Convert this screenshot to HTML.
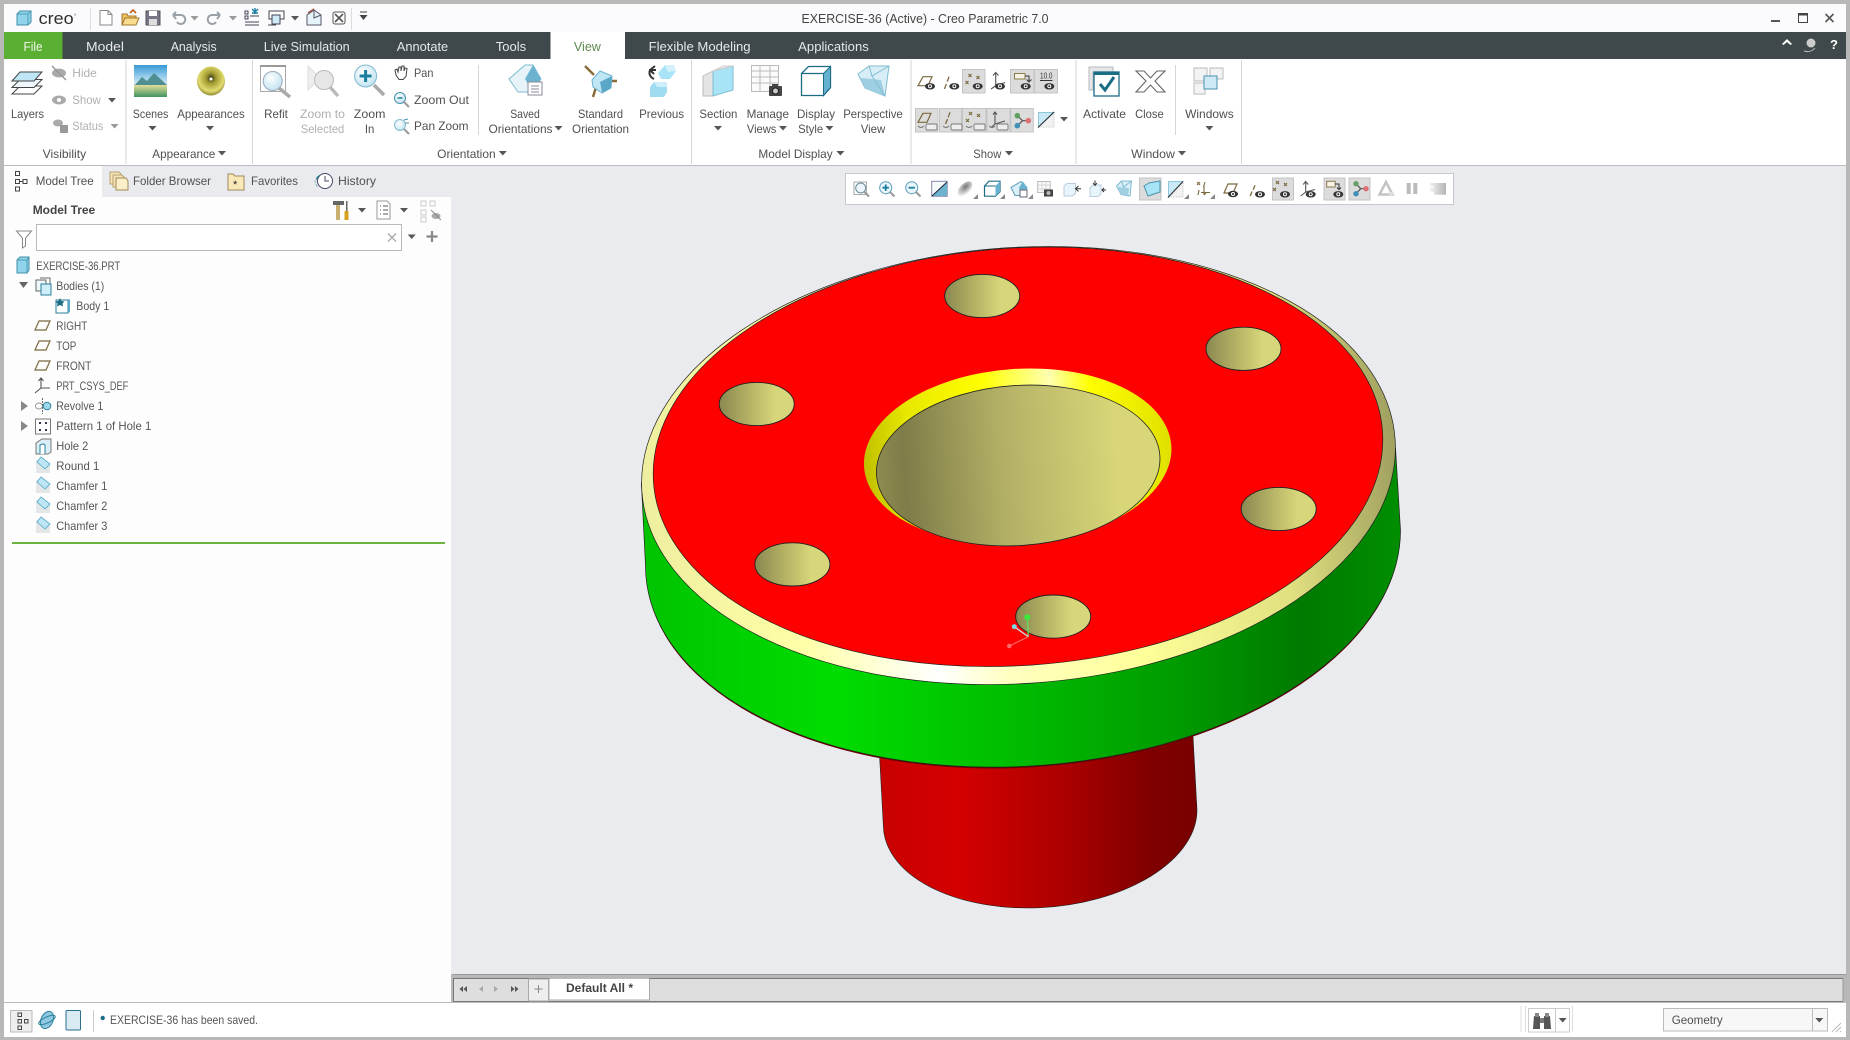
<!DOCTYPE html>
<html><head><meta charset="utf-8"><title>EXERCISE-36 (Active) - Creo Parametric 7.0</title>
<style>
html,body{margin:0;padding:0;width:1850px;height:1040px;overflow:hidden;background:#b8b8b8}
svg{display:block}
text{font-family:"Liberation Sans",sans-serif;font-size:12px;fill:#505050}
.m{text-anchor:middle}
.g{fill:#b0b0b0}
.tab{font-size:13px;fill:#e6e9e9;text-anchor:middle}
.tr{font-size:12px;fill:#565656}
</style></head><body>
<svg width="1850" height="1040" viewBox="0 0 1850 1040" xmlns="http://www.w3.org/2000/svg">
<defs>
<path id="ar" d="M-4-2H4L0 2.500z" fill="#555"/>
<path id="arg" d="M-4-2H4L0 2.500z" fill="#999"/>
<g id="eye"><ellipse rx="5" ry="3.200" fill="#333"/><circle r="2" fill="#fff"/><circle r="1" fill="#222"/></g>
<g id="plane"><path d="M-5-5H6L2 4H-9z" fill="none" stroke="#7a6a3f" stroke-width="1.200"/></g>
<g id="xs"><path d="M-3-3L0 0M0-3L-3 0M5-1L8 2M8-1L5 2M-6 4L-3 7M-3 4L-6 7" stroke="#7a6a3f" stroke-width="1.200"/></g>
<g id="cham"><path d="M-7-5L-2-9 7-2 7 7-7 7z" fill="#e4e6e8"/><path d="M-2-9L7-2 2 3-6-4z" fill="#bfe6f4" stroke="#4fa7c6" stroke-width=".8"/></g>
<g id="mini"><rect x="-1" y="4" width="11" height="6" rx="1" fill="#eee" stroke="#777" stroke-width=".9"/><path d="M-9 6q3 3 6 0" fill="none" stroke="#777"/></g>
<path id="corner" d="M3-3V2H-2z" fill="#888"/>
<linearGradient id="gGreen" gradientUnits="userSpaceOnUse" x1="645" x2="1400" y1="0" y2="0"><stop offset="0" stop-color="#00c400"/><stop offset=".25" stop-color="#00dd00"/><stop offset=".5" stop-color="#00ba00"/><stop offset=".7" stop-color="#009c00"/><stop offset=".87" stop-color="#007a00"/><stop offset="1" stop-color="#008e00"/></linearGradient>
<linearGradient id="gHub" gradientUnits="userSpaceOnUse" x1="878" x2="1197" y1="0" y2="0"><stop offset="0" stop-color="#c80000"/><stop offset=".25" stop-color="#d40000"/><stop offset=".6" stop-color="#aa0000"/><stop offset=".85" stop-color="#800000"/><stop offset="1" stop-color="#780000"/></linearGradient>
<linearGradient id="gCham" gradientUnits="userSpaceOnUse" x1="641" x2="1396" y1="0" y2="0"><stop offset="0" stop-color="#eeeea0"/><stop offset=".2" stop-color="#ffffa8"/><stop offset=".377" stop-color="#ffffff"/><stop offset=".47" stop-color="#ffffc0"/><stop offset=".65" stop-color="#ffff99"/><stop offset=".85" stop-color="#e0e080"/><stop offset="1" stop-color="#a0a060"/></linearGradient>
<linearGradient id="gYel" gradientUnits="userSpaceOnUse" x1="864" x2="1172" y1="0" y2="0"><stop offset="0" stop-color="#c0c000"/><stop offset=".15" stop-color="#e8e800"/><stop offset=".4" stop-color="#ffff00"/><stop offset=".62" stop-color="#ffffb0"/><stop offset=".75" stop-color="#ffff00"/><stop offset="1" stop-color="#e0e000"/></linearGradient>
<linearGradient id="gKh" gradientUnits="userSpaceOnUse" x1="876" x2="1160" y1="0" y2="0"><stop offset="0" stop-color="#8e8c50"/><stop offset=".1" stop-color="#7e7c48"/><stop offset=".45" stop-color="#b3b066"/><stop offset=".85" stop-color="#d8d678"/><stop offset="1" stop-color="#d8d678"/></linearGradient>
<linearGradient id="gHole"><stop offset="0" stop-color="#8a8850"/><stop offset=".45" stop-color="#bab768"/><stop offset=".75" stop-color="#d8d67a"/><stop offset="1" stop-color="#d8d67a"/></linearGradient>
<linearGradient id="gSky" x1="0" x2="0" y1="0" y2="1"><stop offset="0" stop-color="#3a9ad6"/><stop offset=".55" stop-color="#c8e6f5"/></linearGradient>
<linearGradient id="gGround" x1="0" x2="0" y1="0" y2="1"><stop offset="0" stop-color="#e3dd9a"/><stop offset="1" stop-color="#3f9460"/></linearGradient>
<radialGradient id="gGold" cx=".5" cy=".4" r=".6"><stop offset="0" stop-color="#33321a"/><stop offset=".3" stop-color="#a09a30"/><stop offset=".75" stop-color="#e3dc70"/><stop offset="1" stop-color="#8f8a30"/></radialGradient>
<radialGradient id="gLens" cx=".4" cy=".35" r=".7"><stop offset="0" stop-color="#fff"/><stop offset="1" stop-color="#bfe2f0"/></radialGradient>
<radialGradient id="gSmudge" cx=".6" cy=".4" r=".6"><stop offset="0" stop-color="#777"/><stop offset="1" stop-color="#eee"/></radialGradient>
<linearGradient id="gGrayBar"><stop offset="0" stop-color="#f2f2f2"/><stop offset="1" stop-color="#b4b4b4"/></linearGradient>
<g id="hole0"><ellipse rx="37.500" ry="21.600" fill="url(#gHole)" stroke="#222" stroke-width=".9"/></g>
</defs>

<!-- frame -->
<rect width="1850" height="1040" fill="#b8b8b8"/>
<rect x="4" y="4" width="1842" height="28" fill="#fbfbfd"/>
<rect x="4" y="32" width="1842" height="27" fill="#3f484a"/>
<rect x="4" y="59" width="1842" height="106" fill="#fff"/>
<rect x="4" y="165" width="1842" height="1" fill="#bcbcc2"/>
<rect x="4" y="166" width="447" height="836" fill="#fefdfd"/>
<rect x="451" y="166" width="1395" height="808" fill="#e9ebef"/>
<rect x="4" y="1002" width="1842" height="35" fill="#fff"/>

<!-- title bar -->
<path d="M17 14l3-3H31V22l-3 3H17z" fill="#8fd4ea" stroke="#3f8fa8" stroke-width="1"/><path d="M17 14H28V25M28 14l3-3" fill="none" stroke="#3f8fa8" stroke-width=".8"/>
<text x="38.700" y="24" style="font-size:17px;fill:#2e2e2e" textLength="35" lengthAdjust="spacingAndGlyphs">creo</text><text x="74" y="18" style="font-size:6px;fill:#444">°</text>
<rect x="90" y="8" width="1" height="22" fill="#ddd"/><rect x="351" y="8" width="1" height="22" fill="#ddd"/>
<path d="M100 10.500h8l4 4V25h-12z" fill="#fff" stroke="#888"/><path d="M108 10.500v4h4" fill="none" stroke="#888"/>
<path d="M122 14h5l1 2h8v9h-14z" fill="#f0c060" stroke="#a07830"/><path d="M122 25l3-7h14l-3 7z" fill="#f9dc8e" stroke="#a07830"/><path d="M130 13l3-3 3 3" fill="none" stroke="#c06020" stroke-width="1.600"/>
<rect x="146" y="11" width="14" height="14" fill="#778" stroke="#555"/><rect x="149" y="11" width="8" height="5" fill="#fff"/><rect x="149" y="19" width="8" height="6" fill="#ddd"/>
<path d="M173 15h8a4.500 4.500 0 1 1-4 7M173 15l3-3M173 15l3 4" fill="none" stroke="#9aa0a8" stroke-width="2"/>
<use href="#arg" x="194.500" y="18"/>
<path d="M220 15h-8a4.500 4.500 0 1 0 4 7M220 15l-3-3M220 15l-3 4" fill="none" stroke="#9aa0a8" stroke-width="2"/>
<use href="#arg" x="233" y="18"/>
<g stroke="#445" fill="none"><rect x="245" y="11" width="3" height="3"/><rect x="245" y="16" width="3" height="3"/><path d="M245 22h14M245 25h14M250 16h9"/></g><path d="M252 9l3 3 3-3M255 8v6M252 13h6" stroke="#1a7fa0" stroke-width="1.400" fill="none"/>
<g fill="none" stroke="#445"><rect x="269" y="11" width="15" height="8"/><rect x="272" y="15" width="8" height="9" fill="#cfeaf7"/><path d="M268 25h8"/></g>
<use href="#ar" x="295" y="18"/>
<path d="M307 15l7-5 7 5v10h-14z" fill="#e6f4fa" stroke="#556"/><path d="M314 10v8l7-3" fill="none" stroke="#556"/><path d="M308 13l6-4" stroke="#a05040" stroke-width="1.400"/>
<rect x="333" y="12" width="12" height="12" rx="2" fill="#fff" stroke="#555"/><path d="M335 14l8 8M343 14l-8 8" stroke="#555" stroke-width="1.600"/>
<path d="M360 12h7" stroke="#444" stroke-width="1"/><path d="M359.500 15h8l-4 5z" fill="#444"/>
<text class="m" x="925" y="23" style="font-size:13px;fill:#444" textLength="247" lengthAdjust="spacingAndGlyphs">EXERCISE-36 (Active) - Creo Parametric 7.0</text>
<rect x="1771" y="20" width="9" height="2" fill="#555"/>
<rect x="1798.500" y="13.500" width="9" height="9" fill="none" stroke="#444"/><rect x="1798" y="13" width="10" height="2.500" fill="#444"/>
<path d="M1825.500 14l8 8M1833.500 14l-8 8" stroke="#555" stroke-width="1.600"/>

<!-- tab bar -->
<rect x="4" y="32" width="58.500" height="27" fill="#5bb033"/>
<rect x="550.500" y="32" width="74.500" height="27" fill="#fff"/>
<text class="tab" x="33" y="51" style="fill:#f2f7ee" textLength="19" lengthAdjust="spacingAndGlyphs">File</text>
<text class="tab" x="105" y="51" textLength="38" lengthAdjust="spacingAndGlyphs">Model</text>
<text class="tab" x="193.700" y="51" textLength="46" lengthAdjust="spacingAndGlyphs">Analysis</text>
<text class="tab" x="306.700" y="51" textLength="86" lengthAdjust="spacingAndGlyphs">Live Simulation</text>
<text class="tab" x="422.500" y="51" textLength="51.400" lengthAdjust="spacingAndGlyphs">Annotate</text>
<text class="tab" x="511" y="51" textLength="30.400" lengthAdjust="spacingAndGlyphs">Tools</text>
<text class="tab" x="587.400" y="51" style="fill:#5f8a52" textLength="27" lengthAdjust="spacingAndGlyphs">View</text>
<text class="tab" x="699.600" y="51" textLength="102" lengthAdjust="spacingAndGlyphs">Flexible Modeling</text>
<text class="tab" x="833.500" y="51" textLength="70.600" lengthAdjust="spacingAndGlyphs">Applications</text>
<path d="M1782 44l5-5 5 5-1.500 1-3.500-3-3.500 3z" fill="#fff"/>
<circle cx="1811" cy="43" r="4.500" fill="#ccc"/><path d="M1804 51q7 2 11-3" fill="none" stroke="#bbb"/>
<text x="1830" y="49" style="font-size:13px;font-weight:bold;fill:#fff">?</text>

<!-- ribbon separators -->
<g fill="#d4d6d8"><rect x="125.500" y="60" width="1" height="104"/><rect x="252" y="60" width="1" height="104"/><rect x="691" y="60" width="1" height="104"/><rect x="910.500" y="60" width="1" height="104"/><rect x="1075.500" y="60" width="1" height="104"/><rect x="1241" y="60" width="1" height="104"/><rect x="478" y="65" width="1" height="70"/><rect x="1175" y="65" width="1" height="70"/></g>

<!-- Visibility -->
<path d="M12 94l8-8h22l-8 8z" fill="#fff" stroke="#444"/><path d="M12 87.500l8-8h22l-8 8z" fill="#eef8fc" stroke="#444"/><path d="M12 81l8-9h22l-8 9z" fill="#bfe6f5" stroke="#444"/>
<text class="m" x="27.500" y="118" textLength="33" lengthAdjust="spacingAndGlyphs">Layers</text>
<ellipse cx="59" cy="73" rx="7" ry="4.500" fill="#aaa"/><path d="M52 66l14 14" stroke="#999" stroke-width="1.500"/>
<ellipse cx="59" cy="100" rx="7" ry="4.500" fill="#aaa"/><circle cx="59" cy="100" r="2" fill="#fff"/>
<ellipse cx="58" cy="123" rx="5" ry="3.500" fill="#aaa"/><rect x="60" y="125" width="8" height="8" fill="#999"/>
<text class="g" x="72.300" y="77" textLength="24.500" lengthAdjust="spacingAndGlyphs">Hide</text>
<text class="g" x="72.300" y="104" textLength="28.500" lengthAdjust="spacingAndGlyphs">Show</text>
<text class="g" x="72.300" y="130" textLength="31" lengthAdjust="spacingAndGlyphs">Status</text>
<use href="#ar" x="112" y="100"/><use href="#arg" x="114.600" y="126"/>
<text class="m" x="64.400" y="158" textLength="43.500" lengthAdjust="spacingAndGlyphs">Visibility</text>

<!-- Appearance -->
<rect x="134" y="65" width="33" height="32" fill="url(#gSky)"/><path d="M134 86l8-9 5 4 7-8 13 12v4h-33z" fill="#4f8f92"/><rect x="134" y="85" width="33" height="12" fill="url(#gGround)"/>
<text class="m" x="150.600" y="118" textLength="35.600" lengthAdjust="spacingAndGlyphs">Scenes</text><use href="#ar" x="152.500" y="128"/>
<ellipse cx="211" cy="81" rx="14" ry="14.500" fill="url(#gGold)"/><circle cx="211" cy="79" r="1.500" fill="#fff"/>
<text class="m" x="211" y="118" textLength="67.600" lengthAdjust="spacingAndGlyphs">Appearances</text><use href="#ar" x="210" y="128"/>
<text class="m" x="183.800" y="158" textLength="63" lengthAdjust="spacingAndGlyphs">Appearance</text><use href="#ar" x="222" y="153"/>

<!-- Orientation -->
<rect x="260.500" y="65.500" width="25" height="26" fill="#fff" stroke="#aaa"/><rect x="260" y="65" width="26" height="2" fill="#999"/>
<circle cx="272.700" cy="81" r="9.500" fill="url(#gLens)" stroke="#9ab"/><path d="M279 88l11 9" stroke="#aaa" stroke-width="3.500"/>
<path d="M308 66l12 12-12 12z" fill="#eee" stroke="#ddd"/><circle cx="324" cy="80" r="9.500" fill="#e6e6e6" stroke="#bbb"/><path d="M330 87l8 9" stroke="#bbb" stroke-width="3.500"/>
<circle cx="365.600" cy="76" r="11" fill="url(#gLens)" stroke="#7fb7cd"/><path d="M365.600 70v12M359.600 76h12" stroke="#1a7fa0" stroke-width="3"/><path d="M374 85l10 10" stroke="#aaa" stroke-width="3.500"/>
<path d="M396 75l-1-5 2-1 1 3 1-5 2 0 0 4 1-5 2 0 0 5 1-3 2 .5-1 8-3 3h-4z" fill="#fff" stroke="#444"/>
<circle cx="400" cy="98" r="5.500" fill="url(#gLens)" stroke="#4a93ad"/><path d="M397.500 98h5" stroke="#1a7fa0" stroke-width="1.500"/><path d="M404 102l5 5" stroke="#999" stroke-width="2"/>
<circle cx="400" cy="125" r="5.500" fill="url(#gLens)" stroke="#8bc"/><path d="M404 129l5 5" stroke="#999" stroke-width="2"/><path d="M404 120l4-1M405 123l4 0" stroke="#4a93ad"/>
<text class="m" x="276" y="118" textLength="23.700" lengthAdjust="spacingAndGlyphs">Refit</text>
<text class="m g" x="322.500" y="118" textLength="45" lengthAdjust="spacingAndGlyphs">Zoom to</text>
<text class="m g" x="322.500" y="133" textLength="43.500" lengthAdjust="spacingAndGlyphs">Selected</text>
<text class="m" x="369.600" y="118" textLength="31.600" lengthAdjust="spacingAndGlyphs">Zoom</text>
<text class="m" x="369.600" y="133" textLength="9.500" lengthAdjust="spacingAndGlyphs">In</text>
<text x="414" y="77" textLength="19.400" lengthAdjust="spacingAndGlyphs">Pan</text>
<text x="414" y="104" textLength="55" lengthAdjust="spacingAndGlyphs">Zoom Out</text>
<text x="414" y="130" textLength="54.500" lengthAdjust="spacingAndGlyphs">Pan Zoom</text>
<path d="M525 65l-16 14 9 13h15l8-13-8-14z" fill="#e6f4fa" stroke="#7fbcd2"/><path d="M533 65l8 14-8 13-8-13z" fill="#6cb3d0"/><rect x="528" y="82" width="14" height="13" fill="#fff" stroke="#889"/><path d="M531 86h8M531 89h8M531 92h8" stroke="#889"/>
<text class="m" x="525" y="118" textLength="29.600" lengthAdjust="spacingAndGlyphs">Saved</text>
<text class="m" x="520.500" y="133" textLength="64" lengthAdjust="spacingAndGlyphs">Orientations</text><use href="#ar" x="558.500" y="128"/>
<path d="M585 66l9 9M617 81h-8M593 97l4-13" stroke="#8a6d3b" stroke-width="2.500"/><path d="M592 80l8-9 12 5-1 12-9 5-9-6z" fill="#bfe6f5" stroke="#6cb3d0"/><path d="M600 82l12-6-1 12-9 5z" fill="#5aa7c8"/>
<text class="m" x="600.500" y="118" textLength="45" lengthAdjust="spacingAndGlyphs">Standard</text>
<text class="m" x="600.500" y="133" textLength="57" lengthAdjust="spacingAndGlyphs">Orientation</text>
<path d="M658 73l7-8h9l2 6-6 8h-9z" fill="#a9e3f6"/><path d="M665 65l3 7 8-1-2-6z" fill="#d4f1fb"/><path d="M650 87l4-5h13v10l-3 5h-14z" fill="#9fdcf0"/><path d="M654 82l3 5h10v-5z" fill="#cdeefa"/>
<path d="M654 79q-6-3-4-9l6 0M650 70l5-4M650 70l4 4" fill="none" stroke="#333" stroke-width="2"/>
<text class="m" x="661.600" y="118" textLength="45" lengthAdjust="spacingAndGlyphs">Previous</text>
<text class="m" x="466.400" y="158" textLength="58.500" lengthAdjust="spacingAndGlyphs">Orientation</text><use href="#ar" x="502.800" y="153"/>

<!-- Model display -->
<path d="M703 76l10-5v25h-10z" fill="#e4e4e4" stroke="#bbb"/><path d="M713 71l20-5v24l-20 6z" fill="#a9e3f6" stroke="#7fbcd2"/><path d="M703 76l20-10h10l-20 5z" fill="#f0f0f0" stroke="#ccc"/>
<text class="m" x="718.400" y="118" textLength="38" lengthAdjust="spacingAndGlyphs">Section</text><use href="#ar" x="718" y="128"/>
<rect x="751.500" y="65.500" width="27" height="26" fill="#fbfbfb" stroke="#bbb"/><path d="M752 71h27M752 77h27M752 83h27M760 65v27M770 65v27" stroke="#bbb"/>
<rect x="769" y="86" width="13" height="10" rx="1" fill="#444"/><circle cx="775.500" cy="91" r="3" fill="#ccc" stroke="#222"/><rect x="772" y="84" width="6" height="3" fill="#444"/>
<text class="m" x="767.800" y="118" textLength="42.400" lengthAdjust="spacingAndGlyphs">Manage</text>
<text class="m" x="761.600" y="133" textLength="29.400" lengthAdjust="spacingAndGlyphs">Views</text><use href="#ar" x="783" y="128"/>
<path d="M801.500 73.500l7-7h22v21l-7 8h-22z" fill="#fff" stroke="#1b6d86" stroke-width="1.300"/><path d="M823.500 73.500l7-7v21l-7 8z" fill="#65b1cf" stroke="#1b6d86"/><path d="M801.500 73.500h22" stroke="#1b6d86" stroke-width="1.300"/>
<text class="m" x="816" y="118" textLength="38" lengthAdjust="spacingAndGlyphs">Display</text>
<text class="m" x="810.600" y="133" textLength="25" lengthAdjust="spacingAndGlyphs">Style</text><use href="#ar" x="829.400" y="128"/>
<path d="M858 74l11-8h20l-4 30-20-8z" fill="#d8eef6" stroke="#7fbcd2"/><path d="M865 88l-4-10 20 2 4 16z" fill="#9fcfe2"/><path d="M869 66l3 10 17-10M872 76l13 20" fill="none" stroke="#7fbcd2"/>
<text class="m" x="873" y="118" textLength="59.600" lengthAdjust="spacingAndGlyphs">Perspective</text>
<text class="m" x="873" y="133" textLength="24.500" lengthAdjust="spacingAndGlyphs">View</text>
<text class="m" x="795.500" y="158" textLength="74.300" lengthAdjust="spacingAndGlyphs">Model Display</text><use href="#ar" x="840.400" y="153"/>

<!-- Show -->
<g fill="#dcdcdc" stroke="#c4c4c4"><rect x="962.500" y="69.500" width="22.500" height="23.500"/><rect x="1010.500" y="69.500" width="23.500" height="23.500"/><rect x="1034.500" y="69.500" width="23" height="23.500"/>
<rect x="915.500" y="108.500" width="22.500" height="23.500"/><rect x="939.500" y="108.500" width="22" height="23.500"/><rect x="962.500" y="108.500" width="23.500" height="23.500"/><rect x="987" y="108.500" width="23" height="23.500"/><rect x="1010.800" y="108.500" width="22.500" height="23.500"/></g>
<path d="M923 76.700h9L928 85.700h-10z" fill="none" stroke="#7a6a3f" stroke-width="1.200"/><use href="#eye" x="930" y="86.300"/>
<path d="M949 76.700l-1.800 5M946.300 84l-1.800 5" stroke="#7a6a3f" stroke-width="1.300"/><use href="#eye" x="954.300" y="86.300"/>
<use href="#xs" x="971.500" y="77"/><use href="#eye" x="977.700" y="86.300"/>
<path d="M995.700 73V85.700L991 89M995.700 85.700L1005 82.500M993 75.500l2.700-3 2.700 3" fill="none" stroke="#555" stroke-width="1.100"/><use href="#eye" x="1000" y="86.300"/>
<rect x="1014.500" y="73.500" width="10.500" height="5.500" fill="#f6f2e4" stroke="#8a7a50"/><path d="M1025 76h4v5M1026.500 79.500l2.500 2.500 2.500-2.500" stroke="#333" fill="none"/><use href="#eye" x="1025.700" y="86.300"/>
<text x="1040" y="78.500" style="font-size:8.500px;fill:#333" textLength="12.500" lengthAdjust="spacingAndGlyphs">10.0</text><path d="M1040 80.500h12.500" stroke="#333"/><use href="#eye" x="1049.300" y="86.300"/>
<path d="M923 113.300h8L927 122.300h-9z" fill="none" stroke="#7a6a3f" stroke-width="1.200"/><use href="#mini" x="927" y="120"/>
<path d="M950 112.300l-1.800 5M947.500 119l-2 5" stroke="#7a6a3f" stroke-width="1.300"/><use href="#mini" x="952" y="120"/>
<use href="#xs" x="972" y="115"/><use href="#mini" x="975" y="120"/>
<path d="M995 112V124L991 127.500M995 124L1005 121M993 114.500l2-2.500 2 2.500" fill="none" stroke="#555" stroke-width="1.100"/><use href="#mini" x="998" y="120"/>
<path d="M1017.300 115.700L1022.600 120.700 1017.300 125.700M1022.600 120.700h5.700" stroke="#555" fill="none" stroke-width="1.200"/><circle cx="1017.300" cy="115.700" r="2.800" fill="#5f9f5f"/><circle cx="1017.300" cy="125.700" r="2.800" fill="#3f8fb8"/><circle cx="1028.300" cy="120.700" r="2.800" fill="#dd7070"/>
<path d="M1038.500 127L1054 112.500V127z" fill="#f2f2f2" stroke="#ccc" stroke-dasharray="1.500 1"/><path d="M1038.500 127V112.500H1054z" fill="#c9e9f6" stroke="#8fc6da"/><path d="M1038 127.500l16-15.500" stroke="#333" stroke-width="1.100"/>
<use href="#ar" x="1064" y="119"/>
<text class="m" x="987.300" y="158" textLength="28" lengthAdjust="spacingAndGlyphs">Show</text><use href="#ar" x="1009" y="153"/>

<!-- Window -->
<path d="M1089 67h24v5h-20v18h-4z" fill="#e4e6e8" stroke="#b8babc"/>
<rect x="1094" y="72" width="25" height="24" fill="#fff" stroke="#1b6d86" stroke-width="1.300"/><rect x="1094" y="72" width="25" height="3" fill="#1b6d86"/><path d="M1100 84l5 6 9-13" fill="none" stroke="#1b6d86" stroke-width="3"/>
<text class="m" x="1104.500" y="118" textLength="43" lengthAdjust="spacingAndGlyphs">Activate</text>
<path d="M1136 71h8l6.500 7 6.500-7h8l-10 10 10 11h-8l-6.500-7-6.500 7h-8l10-11z" fill="#fff" stroke="#666" stroke-width="1.100"/>
<text class="m" x="1149.400" y="118" textLength="28.600" lengthAdjust="spacingAndGlyphs">Close</text>
<rect x="1194" y="83" width="11" height="11" fill="#f3f3f3" stroke="#bbb"/><rect x="1194" y="68" width="13" height="13" fill="#f3f3f3" stroke="#bbb"/><rect x="1210" y="68" width="13" height="11" fill="#f3f3f3" stroke="#bbb"/><rect x="1204" y="76" width="13" height="13" fill="#cfeaf7" stroke="#4a93ad"/>
<text class="m" x="1209.400" y="118" textLength="48.600" lengthAdjust="spacingAndGlyphs">Windows</text><use href="#ar" x="1209.400" y="128"/>
<text class="m" x="1153" y="158" textLength="43.700" lengthAdjust="spacingAndGlyphs">Window</text><use href="#ar" x="1182" y="153"/>

<!-- Panel tabs -->
<rect x="102" y="166" width="349" height="31" fill="#e9ebee"/>
<g fill="none" stroke="#444"><rect x="15.500" y="171.500" width="4" height="4"/><rect x="15.500" y="179.500" width="4" height="4"/><rect x="15.500" y="187" width="4" height="4"/><rect x="23" y="179.500" width="4" height="4"/></g><path d="M19.500 181.500h3.500" stroke="#444"/>
<text x="35.700" y="185" textLength="58" lengthAdjust="spacingAndGlyphs">Model Tree</text>
<path d="M110 172h9l2 2v10h-11z" fill="#f6e4b8" stroke="#b8a070"/><path d="M113 175h9l2 2v10h-11z" fill="#f6e4b8" stroke="#b8a070"/><path d="M116 178h10l2 3v9h-12z" fill="#fbeec8" stroke="#a08858"/>
<text x="133" y="185" textLength="78" lengthAdjust="spacingAndGlyphs">Folder Browser</text>
<path d="M228 174h5l2 2h9v14h-16z" fill="#f9e8b8" stroke="#a08858"/><text x="233" y="188" style="font-size:11px;fill:#222">*</text>
<text x="251" y="185" textLength="47" lengthAdjust="spacingAndGlyphs">Favorites</text>
<circle cx="325" cy="181" r="7.500" fill="#fff" stroke="#446"/><path d="M325 176v5h4" stroke="#446" fill="none"/><path d="M321 174.500a7.500 7.500 0 0 0-3 13l-3.500-6z" fill="#1b6d86"/>
<text x="338" y="185" textLength="38" lengthAdjust="spacingAndGlyphs">History</text>

<!-- Panel tools -->
<text x="32.700" y="214" style="font-weight:bold;fill:#444" textLength="62.500" lengthAdjust="spacingAndGlyphs">Model Tree</text>
<rect x="336" y="204" width="4" height="16" fill="#c9b070"/><path d="M333 201h11v4h-11z" fill="#666"/><rect x="346" y="201" width="1.500" height="10" fill="#666"/><rect x="344.500" y="211" width="4" height="9" fill="#d4a020"/>
<use href="#ar" x="362" y="210"/>
<path d="M377 201h10l3 3v15h-13z" fill="#fff" stroke="#999"/><path d="M380 206h1M383 206h5M380 210h1M383 210h5M380 214h1M383 214h5" stroke="#555"/>
<use href="#ar" x="404" y="210"/>
<g fill="none" stroke="#ccc"><rect x="421" y="201" width="5" height="5"/><rect x="430" y="201" width="5" height="5"/><rect x="421" y="210" width="5" height="5"/><rect x="421" y="217" width="5" height="5"/></g><ellipse cx="436" cy="216" rx="4.500" ry="3" fill="#aaa"/><path d="M431 210l10 10" stroke="#888"/>
<path d="M16.500 231h15l-6 7v8l-3 2v-10z" fill="#fff" stroke="#888"/>
<rect x="36.500" y="224.500" width="365" height="26" fill="#fff" stroke="#b8b8b8"/>
<path d="M388 233.500l8 8M396 233.500l-8 8" stroke="#aaa" stroke-width="1.300"/>
<use href="#ar" x="411.700" y="236.500"/>
<path d="M432 231v11M426.500 236.500h11" stroke="#888" stroke-width="2.200"/>

<!-- Tree -->
<path d="M17 260l3-3h9v13l-2 3H17z" fill="#8fd4ea" stroke="#3f8fa8"/><path d="M17 260h10v13M27 260l2-3" fill="none" stroke="#3f8fa8" stroke-width=".8"/>
<text class="tr" x="36.300" y="270" textLength="84" lengthAdjust="spacingAndGlyphs">EXERCISE-36.PRT</text>
<path d="M19 282h9l-4.500 6z" fill="#666"/>
<rect x="36" y="280" width="10" height="11" fill="#eef8fc" stroke="#666"/><path d="M40 278h10v7" fill="none" stroke="#666"/><rect x="41" y="284" width="10" height="11" fill="#cdeefa" stroke="#2a7f9c"/>
<text class="tr" x="56.300" y="290" textLength="48" lengthAdjust="spacingAndGlyphs">Bodies (1)</text>
<rect x="56" y="300" width="12" height="13" fill="#fff" stroke="#2a7f9c"/><path d="M68 300l2-1v13l-2 1z" fill="#5aa7c8"/><path d="M60 298l1.500 3 3 .5-2 2 .5 3-3-1.500-3 1.500.5-3-2-2 3-.5z" fill="#1b6d86"/>
<text class="tr" x="76.300" y="310" textLength="33" lengthAdjust="spacingAndGlyphs">Body 1</text>
<use href="#plane" x="44" y="326"/><text class="tr" x="56.300" y="330" textLength="31" lengthAdjust="spacingAndGlyphs">RIGHT</text>
<use href="#plane" x="44" y="346"/><text class="tr" x="56.300" y="350" textLength="20" lengthAdjust="spacingAndGlyphs">TOP</text>
<use href="#plane" x="44" y="366"/><text class="tr" x="56.300" y="370" textLength="35" lengthAdjust="spacingAndGlyphs">FRONT</text>
<path d="M41 379V388L35 393M41 388H50M38.500 381l2.500-3 2.500 3" fill="none" stroke="#555" stroke-width="1.100"/>
<text class="tr" x="56.300" y="390" textLength="72" lengthAdjust="spacingAndGlyphs">PRT_CSYS_DEF</text>
<path d="M21 401l7 5-7 5z" fill="#888"/>
<ellipse cx="39" cy="406" rx="3.500" ry="3" fill="none" stroke="#999"/><circle cx="47" cy="406" r="3.800" fill="#9cd8ee" stroke="#2a7f9c"/><path d="M42.500 398v16" stroke="#666" stroke-dasharray="2 1"/>
<text class="tr" x="56.300" y="410" textLength="47" lengthAdjust="spacingAndGlyphs">Revolve 1</text>
<path d="M21 421l7 5-7 5z" fill="#888"/>
<rect x="35.500" y="419" width="15" height="15" fill="#fff" stroke="#777"/><g fill="#335"><rect x="39" y="422" width="2" height="2"/><rect x="45" y="422" width="2" height="2"/><rect x="39" y="429" width="2" height="2"/><rect x="45" y="429" width="2" height="2"/></g>
<text class="tr" x="56.300" y="430" textLength="95" lengthAdjust="spacingAndGlyphs">Pattern 1 of Hole 1</text>
<path d="M36 443l6-4h9v13l-3 2H36z" fill="#d9eef6" stroke="#777"/><path d="M40 454v-9q3-2 5 0v9" fill="#fff" stroke="#2a7f9c"/>
<text class="tr" x="56.300" y="450" textLength="32" lengthAdjust="spacingAndGlyphs">Hole 2</text>
<use href="#cham" x="43" y="466"/><text class="tr" x="56.300" y="470" textLength="43" lengthAdjust="spacingAndGlyphs">Round 1</text>
<use href="#cham" x="43" y="486"/><text class="tr" x="56.300" y="490" textLength="51" lengthAdjust="spacingAndGlyphs">Chamfer 1</text>
<use href="#cham" x="43" y="506"/><text class="tr" x="56.300" y="510" textLength="51" lengthAdjust="spacingAndGlyphs">Chamfer 2</text>
<use href="#cham" x="43" y="526"/><text class="tr" x="56.300" y="530" textLength="51" lengthAdjust="spacingAndGlyphs">Chamfer 3</text>
<rect x="12" y="542" width="433" height="2" fill="#6cb33f"/>

<!-- Graphics toolbar -->
<rect x="845.500" y="173.500" width="608" height="31" fill="#fff" stroke="#c8c8cc"/>
<g fill="#dcdcdc" stroke="#c4c4c4"><rect x="1139.500" y="178" width="21.500" height="22"/><rect x="1272.500" y="178" width="21" height="22"/><rect x="1324" y="178" width="21" height="22"/><rect x="1349" y="178" width="21" height="22"/></g>
<rect x="854" y="182" width="12.500" height="12.500" fill="#fff" stroke="#aaa"/><circle cx="860.700" cy="188" r="5" fill="#eaf6fb" stroke="#6a8a98"/><path d="M864.500 192l4.500 4.500" stroke="#999" stroke-width="2"/>
<circle cx="885.700" cy="187.700" r="6" fill="#eaf6fb" stroke="#5a9ab4"/><path d="M885.700 184.500v6.400M882.500 187.700h6.400" stroke="#1a7fa0" stroke-width="1.800"/><path d="M890 192l4.500 4.500" stroke="#999" stroke-width="2"/>
<circle cx="911.700" cy="187.700" r="6" fill="#eaf6fb" stroke="#5a9ab4"/><path d="M908.500 187.700h6.400" stroke="#1a7fa0" stroke-width="1.800"/><path d="M916 192l4.500 4.500" stroke="#999" stroke-width="2"/>
<rect x="931.700" y="181.300" width="15.500" height="15" fill="#f4f9fb" stroke="#88a"/><path d="M932 196l15-14v14z" fill="#6cb3d0"/><path d="M932 196l15-14" stroke="#223"/>
<ellipse cx="965" cy="188.700" rx="9" ry="5" fill="url(#gSmudge)" transform="rotate(-45 965 188.700)"/><use href="#corner" x="975" y="197"/>
<path d="M984.500 186l4.500-4.800h11v10.500l-4.500 4.500h-11z" fill="#fff" stroke="#1b6d86" stroke-width="1.200"/><path d="M995.500 186l4.500-4.800v10.500l-4.500 4.500z" fill="#65b1cf"/><path d="M984.500 186h11" stroke="#1b6d86"/><use href="#corner" x="1002" y="197"/>
<path d="M1021 181.500l-10 6 4 8h9l3-8z" fill="#d9f0f8" stroke="#5a9ab4"/><path d="M1023 181.500l4 6-3 8h-3l-2-8z" fill="#6cb3d0"/><rect x="1020" y="190" width="7" height="7" fill="#fff" stroke="#667"/><use href="#corner" x="1030" y="197"/>
<rect x="1037.700" y="181.500" width="12.500" height="11" fill="#fafafa" stroke="#bbb"/><path d="M1038 185h12M1038 189h12M1042 181.500v11M1046 181.500v11" stroke="#ccc" stroke-width=".7"/><rect x="1044" y="189.500" width="9" height="7" fill="#444"/><circle cx="1048.500" cy="193" r="2" fill="#bbb"/>
<path d="M1064 186l3-2.500h8.500v10l-3 2.500h-8.500z" fill="#e6f5fb" stroke="#bcd"/><path d="M1081 188.700h-5M1078.500 186l-3 2.700 3 2.700" stroke="#333" fill="none"/>
<path d="M1090 188l3-3h8v9l-3 2.500h-8z" fill="#e6f5fb" stroke="#bcd"/><path d="M1095 180.500v4M1093 183l2 2.500 2-2.500M1106 190h-4M1104 188l-2 2 2 2" stroke="#333" fill="none"/>
<path d="M1116.500 186l5-5h10l-1.500 15-9-1.500z" fill="#d9eef6" stroke="#7fbcd2"/><path d="M1118 187l11 1-1 7-8-1.500z" fill="#a0cfe2"/><path d="M1121.500 181l2 6 8-6" fill="none" stroke="#7fbcd2"/>
<path d="M1144 186l5-3 11-2v11l-12 4z" fill="#a9e3f6" stroke="#4a93ad"/>
<path d="M1168.500 197l14.500-15.500V197z" fill="#f2f2f2" stroke="#ccc" stroke-dasharray="1.500 1"/><path d="M1168.500 197V181.500H1183z" fill="#c9e9f6" stroke="#8fc6da"/><path d="M1168 197.500l15-16" stroke="#333" stroke-width="1.100"/><use href="#corner" x="1186" y="197"/>
<path d="M1197 182l3 3M1200 182l-3 3M1205 182l-1.500 5M1199 190l-1 5M1196 190l0 0M1204 186v9M1201 192.500h9M1206 193l-2 2" stroke="#7a6a3f" stroke-width="1.100" fill="none"/><use href="#corner" x="1212" y="197"/>
<path d="M1228 184h9L1233 193h-9z" fill="none" stroke="#7a6a3f" stroke-width="1.200"/><use href="#eye" x="1233" y="194"/>
<path d="M1255 185.300l-1.800 4.500M1252 191.500l-1.800 4.500" stroke="#7a6a3f" stroke-width="1.300"/><use href="#eye" x="1260" y="194.300"/>
<use href="#xs" x="1279" y="184"/><use href="#eye" x="1285" y="194.300"/>
<path d="M1305.700 182V192L1300.700 196M1305.700 192L1315 189.500M1303.200 184.500l2.500-3 2.500 3" fill="none" stroke="#555" stroke-width="1.100"/><use href="#eye" x="1310.700" y="194.300"/>
<rect x="1326.700" y="181.300" width="8.500" height="5.700" fill="#f6f2e4" stroke="#8a7a50"/><path d="M1335 184h4v5M1337 187.500l2 2 2-2" stroke="#333" fill="none"/><use href="#eye" x="1338.300" y="194.300"/>
<path d="M1356 183.700L1360.700 188.700 1356 193.700M1360.700 188.700H1366" stroke="#555" fill="none" stroke-width="1.200"/><circle cx="1356" cy="183.700" r="2.700" fill="#6aa06a"/><circle cx="1356" cy="193.700" r="2.700" fill="#3f8fb8"/><circle cx="1366" cy="188.700" r="2.700" fill="#dd7070"/>
<path d="M1386 182l6.500 12.500h-13z" fill="none" stroke="#c4c4c4" stroke-width="2.500"/><circle cx="1391" cy="194" r="2" fill="#ddd"/>
<rect x="1406.700" y="183" width="4" height="11" fill="#bbb"/><rect x="1413.300" y="183" width="4" height="11" fill="#bbb"/>
<path d="M1430 183h16v11.700h-12v-3h-4v-4h4v-1.500h-4z" fill="url(#gGrayBar)"/>

<!-- 3D model -->
<path d="M878.700 740L883.300 825A157 90 -4 0 0 1197 810L1192.400 725z" fill="url(#gHub)" stroke="#222" stroke-width=".6"/>
<ellipse cx="1023" cy="549.500" rx="378" ry="218" transform="rotate(-4 1023 549.500)" fill="#6a0000"/>
<path d="M641.400 483L645.500 565.500A378 218 -4 0 0 1400.500 530.500L1395.500 448z" fill="url(#gGreen)" stroke="#222" stroke-width=".7"/>
<ellipse cx="1018.500" cy="465.500" rx="377.500" ry="218" transform="rotate(-4 1018.500 465.500)" fill="url(#gCham)" stroke="#222" stroke-width=".7"/>
<ellipse cx="1018" cy="456.800" rx="365.400" ry="208.700" transform="rotate(-4 1018 456.800)" fill="#fe0000" stroke="#222" stroke-width=".7"/>
<ellipse cx="1017.700" cy="456.400" rx="154" ry="87.500" transform="rotate(-4 1017.700 456.400)" fill="url(#gYel)"/>
<ellipse cx="1018.200" cy="465.500" rx="142" ry="80" transform="rotate(-4 1018.200 465.500)" fill="url(#gKh)" stroke="#222" stroke-width=".8"/>
<use href="#hole0" x="982.200" y="296"/><use href="#hole0" x="1243.500" y="348.800"/><use href="#hole0" x="756.700" y="404"/><use href="#hole0" x="1278.700" y="509"/><use href="#hole0" x="792.400" y="564.400"/><use href="#hole0" x="1053.200" y="616.600"/>
<path d="M1028.300 636.700L1027.300 617.300" stroke="#5ee05e" stroke-width="1.300"/><circle cx="1027.300" cy="617.300" r="3" fill="#3bea3b"/>
<path d="M1028.300 636.700L1014.300 626.700" stroke="#c8e0e0" stroke-width="1.300"/><circle cx="1014.300" cy="626.700" r="2.500" fill="#7fd8e0"/>
<path d="M1028.300 636.700L1009.300 646" stroke="#ff6a6a" stroke-width="1.100"/><circle cx="1009.300" cy="646" r="2.300" fill="#ff6a6a"/>

<!-- Bottom strip -->
<rect x="453" y="974" width="1393" height="1" fill="#999"/>
<rect x="453" y="978" width="1390" height="24" fill="#dedede"/><path d="M453.500 1002V978.500H1843M453 1001.500H1843" fill="none" stroke="#777"/><path d="M1843 978.500V1001.500" stroke="#999"/>
<path d="M467 986v6l-3.500-3zM463 986v6l-3.500-3z" fill="#555"/><path d="M483 986v6l-4-3z" fill="#aaa"/><path d="M494 986v6l4-3z" fill="#aaa"/><path d="M511 986v6l3.500-3zM515 986v6l3.500-3z" fill="#555"/>
<rect x="528.500" y="979" width="20" height="22" fill="#eee" stroke="#aaa"/><path d="M538.500 985v8M534.500 989h8" stroke="#888"/>
<path d="M549 978.500V1000h100.500V978.500" fill="#fff" stroke="#aaa"/>
<text class="m" x="599.500" y="992" style="font-weight:bold;fill:#444" textLength="67" lengthAdjust="spacingAndGlyphs">Default All *</text>

<!-- Status bar -->
<rect x="4" y="1002" width="1842" height="1" fill="#bbb"/>
<rect x="10.500" y="1010.500" width="21.500" height="21.500" fill="#eee" stroke="#bbb"/>
<g fill="none" stroke="#444"><rect x="18" y="1013" width="3.500" height="3.500"/><rect x="18" y="1019.500" width="3.500" height="3.500"/><rect x="18" y="1026" width="3.500" height="3.500"/><rect x="24.500" y="1019.500" width="3.500" height="3.500"/></g>
<ellipse cx="47" cy="1020" rx="6" ry="9" fill="#8fc8e0" stroke="#2a7f9c" transform="rotate(25 47 1020)"/><ellipse cx="47" cy="1020" rx="3" ry="9" fill="none" stroke="#2a7f9c" transform="rotate(65 47 1020)"/>
<rect x="66" y="1010.500" width="14.500" height="19.500" rx="1" fill="#d8eaf2" stroke="#2a6f8c"/>
<rect x="93" y="1010" width="1" height="22" fill="#ccc"/>
<circle cx="102.700" cy="1018" r="2.200" fill="#1b6d86"/>
<text class="tr" x="110" y="1024" style="fill:#555" textLength="148" lengthAdjust="spacingAndGlyphs">EXERCISE-36 has been saved.</text>
<rect x="1520.500" y="1006" width="1" height="26" fill="#ddd"/><rect x="1525" y="1006" width="1" height="26" fill="#ddd"/><rect x="1572" y="1006" width="1" height="26" fill="#ddd"/>
<rect x="1528.500" y="1008.500" width="41" height="23.500" fill="#fff" stroke="#ccc"/><rect x="1555" y="1009" width="1" height="23" fill="#ccc"/>
<path d="M1534 1016h6v13h-7zM1544 1016h6l1 13h-7z" fill="#555"/><rect x="1535" y="1013" width="4" height="4" fill="#888"/><rect x="1545" y="1013" width="4" height="4" fill="#888"/><rect x="1540" y="1018" width="4" height="5" fill="#777"/>
<use href="#ar" x="1562.700" y="1020"/>
<rect x="1663.500" y="1008.500" width="164" height="22.500" fill="#f7f7f7" stroke="#bbb"/><rect x="1812" y="1009" width="1" height="22" fill="#bbb"/>
<text x="1671.700" y="1024" textLength="51" lengthAdjust="spacingAndGlyphs">Geometry</text>
<use href="#ar" x="1819.300" y="1020"/>
<path d="M1832 1032l9-9M1836 1032l5-5M1840 1032l1-1" stroke="#bbb"/>
</svg>
</body></html>
